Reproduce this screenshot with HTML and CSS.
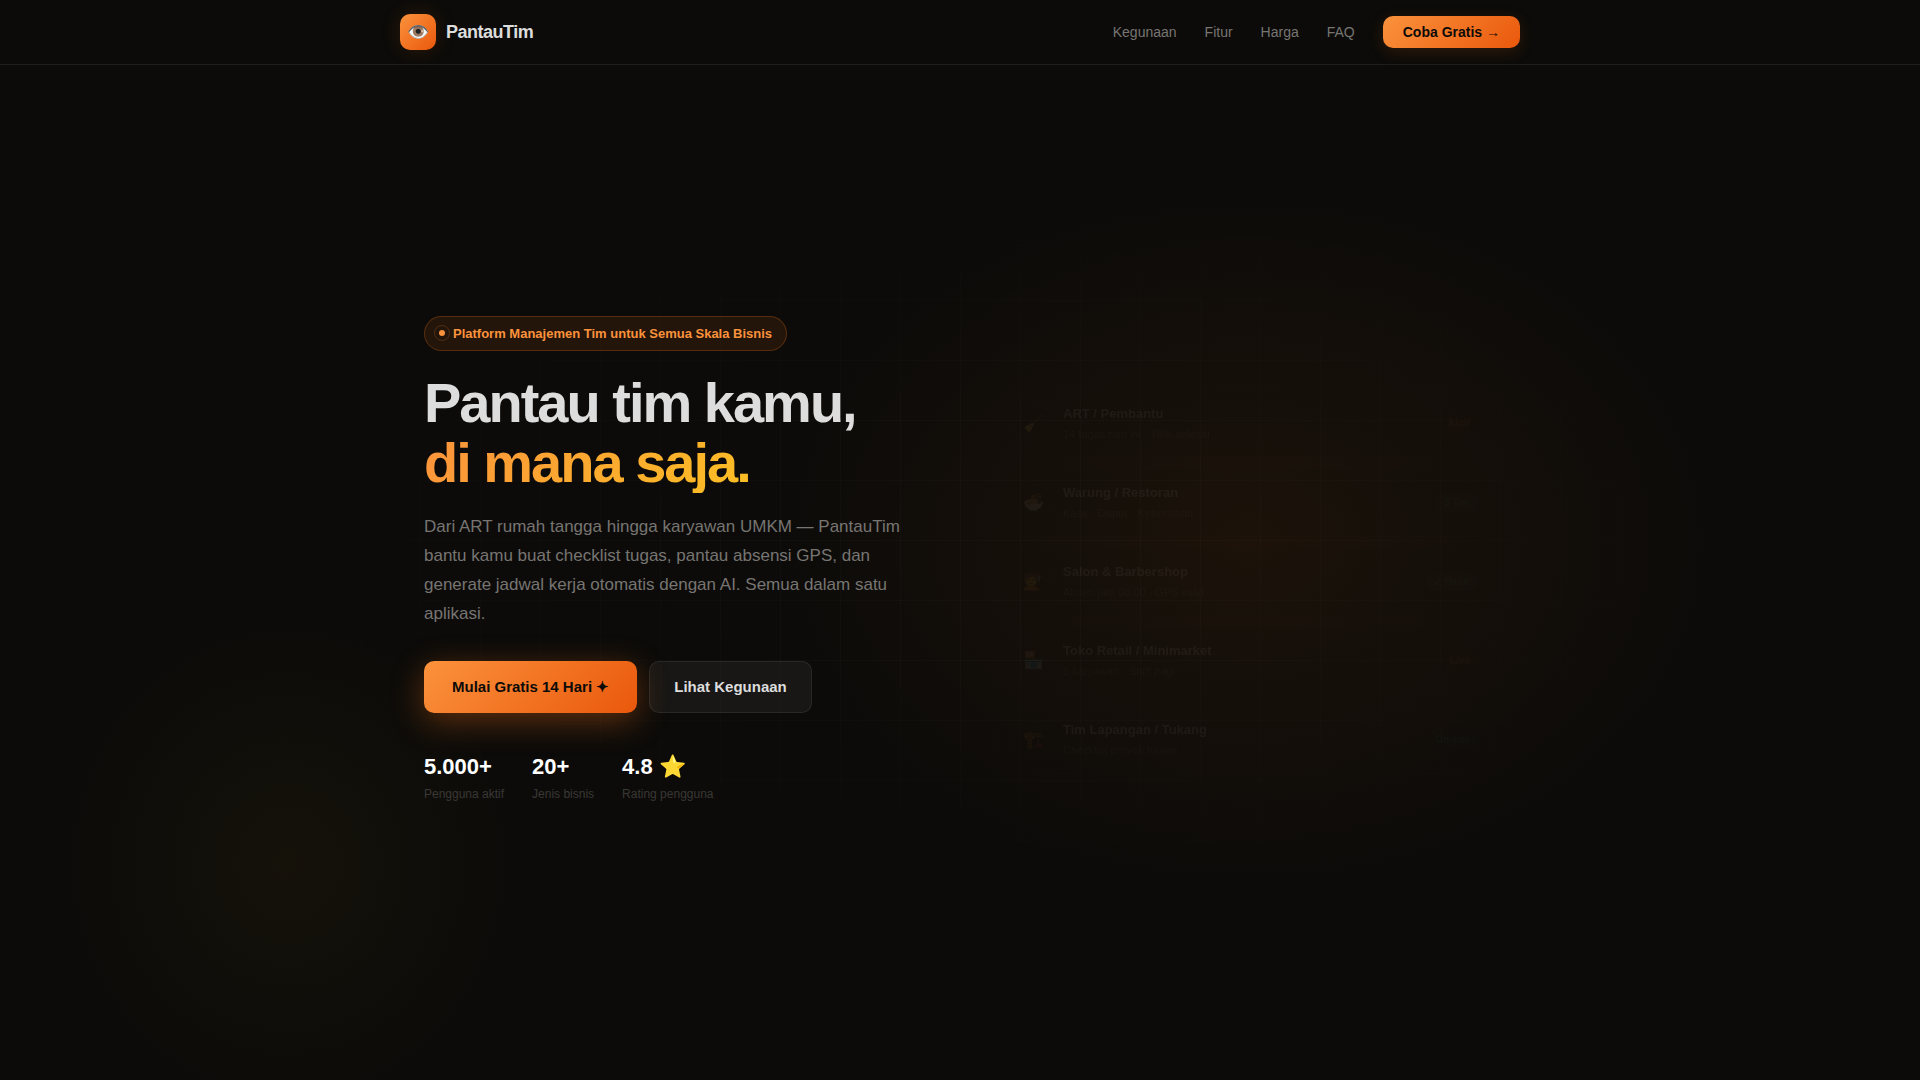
FILE: index.html
```html
<!DOCTYPE html>
<html lang="id">
<head>
    <meta charset="UTF-8">
    <meta name="viewport" content="width=device-width, initial-scale=1.0">
    <title>PantauTim</title>
    <link rel="stylesheet" href="styles.css">
</head>
<body>

    <nav class="navbar">
        <div class="nav-inner">
            <a href="#" class="logo">
                <span class="logo-icon">👁️</span>
                <span>PantauTim</span>
            </a>
            <div class="nav-links">
                <a href="#kegunaan">Kegunaan</a>
                <a href="#fitur">Fitur</a>
                <a href="#harga">Harga</a>
                <a href="#faq">FAQ</a>
                <button type="button" class="nav-cta">Coba Gratis →</button>
            </div>
        </div>
    </nav>

    <main class="hero">
        <div class="hero-grid"></div>
        <div class="hero-inner">
            <section class="hero-text">
                <div class="badge"><span class="badge-dot"></span>Platform Manajemen Tim untuk Semua Skala Bisnis</div>
                <h1>Pantau tim kamu,<br><span class="gradient-text">di mana saja.</span></h1>
                <p class="hero-desc">Dari ART rumah tangga hingga karyawan UMKM — PantauTim bantu kamu buat checklist tugas, pantau absensi GPS, dan generate jadwal kerja otomatis dengan AI. Semua dalam satu aplikasi.</p>
                <div class="hero-buttons">
                    <button type="button" class="btn btn-primary">Mulai Gratis 14 Hari ✦</button>
                    <button type="button" class="btn btn-ghost">Lihat Kegunaan</button>
                </div>
                <div class="stats">
                    <div>
                        <div class="stat-num">5.000+</div>
                        <div class="stat-label">Pengguna aktif</div>
                    </div>
                    <div>
                        <div class="stat-num">20+</div>
                        <div class="stat-label">Jenis bisnis</div>
                    </div>
                    <div>
                        <div class="stat-num">4.8 ⭐</div>
                        <div class="stat-label">Rating pengguna</div>
                    </div>
                </div>
            </section>

            <section class="cards">
                <div class="card">
                    <div class="card-icon">🧹</div>
                    <div class="card-body">
                        <div class="card-title">ART / Pembantu</div>
                        <div class="card-sub">14 tugas hari ini · 78% selesai</div>
                    </div>
                    <span class="pill pill-orange">Aktif</span>
                </div>
                <div class="card">
                    <div class="card-icon">🍜</div>
                    <div class="card-body">
                        <div class="card-title">Warung / Restoran</div>
                        <div class="card-sub">Kasir · Dapur · Kebersihan</div>
                    </div>
                    <span class="pill pill-green">3 Tim</span>
                </div>
                <div class="card">
                    <div class="card-icon">💇</div>
                    <div class="card-body">
                        <div class="card-title">Salon &amp; Barbershop</div>
                        <div class="card-sub">Absen jam 08:00 · GPS valid</div>
                    </div>
                    <span class="pill pill-green">✓ Hadir</span>
                </div>
                <div class="card">
                    <div class="card-icon">🏪</div>
                    <div class="card-body">
                        <div class="card-title">Toko Retail / Minimarket</div>
                        <div class="card-sub">5 karyawan · Shift pagi</div>
                    </div>
                    <span class="pill pill-orange">Live</span>
                </div>
                <div class="card">
                    <div class="card-icon">🏗️</div>
                    <div class="card-body">
                        <div class="card-title">Tim Lapangan / Tukang</div>
                        <div class="card-sub">Checklist proyek harian</div>
                    </div>
                    <span class="pill pill-green">On-site</span>
                </div>
            </section>
        </div>
    </main>

</body>
</html>
```
FILE: styles.css
```css
* {
    box-sizing: border-box;
    margin: 0;
    padding: 0;
}
body {
    font-family: "Liberation Sans", Arial, sans-serif;
    background-color: #0c0b09;
    color: #dddddd;
}
a {
    color: inherit;
    text-decoration: none;
}
button {
    font-family: inherit;
    font-weight: bold;
    border: none;
    cursor: pointer;
}

/* Navbar */
.navbar {
    position: fixed;
    top: 0;
    left: 0;
    right: 0;
    z-index: 10;
    background-color: #0c0b09;
    border-bottom: 1px solid #1f1e1c;
}
.nav-inner {
    max-width: 1120px;
    height: 64px;
    margin: 0 auto;
    display: flex;
    align-items: center;
    justify-content: space-between;
}
.logo {
    display: flex;
    align-items: center;
    gap: 10px;
    font-size: 18px;
    font-weight: bold;
    letter-spacing: -0.5px;
}
.logo-icon {
    width: 36px;
    height: 36px;
    display: flex;
    align-items: center;
    justify-content: center;
    border-radius: 10px;
    background: linear-gradient(135deg, #fb923c, #ea580c);
    box-shadow: 0 0 20px rgba(249, 115, 22, 0.15);
    letter-spacing: 0;
    font-size: 18px;
}
.nav-links {
    display: flex;
    align-items: center;
    gap: 28px;
    font-size: 14px;
    color: #777572;
}
.nav-cta {
    height: 32px;
    padding: 0 20px;
    border-radius: 10px;
    background: linear-gradient(135deg, #fb923c, #ea580c);
    box-shadow: 0 4px 16px rgba(249, 115, 22, 0.15);
    color: #0c0b09;
    font-size: 14px;
}

/* Hero */
.hero {
    position: relative;
    min-height: 100vh;
    padding: 100px 24px 61px;
    display: flex;
    align-items: center;
    justify-content: center;
    background:
        radial-gradient(ellipse 25% 33% at 65% 50%, rgba(249, 115, 22, 0.07), transparent),
        radial-gradient(ellipse 12% 23% at 15% 80%, rgba(251, 191, 36, 0.04), transparent);
}
.hero-grid {
    position: absolute;
    inset: 0;
    background-image:
        linear-gradient(rgba(255, 255, 255, 0.02) 1px, transparent 1px),
        linear-gradient(90deg, rgba(255, 255, 255, 0.02) 1px, transparent 1px);
    background-size: 60px 60px;
    -webkit-mask-image: radial-gradient(ellipse 44% 38% at 50% 50%, black 30%, transparent);
    mask-image: radial-gradient(ellipse 44% 38% at 50% 50%, black 30%, transparent);
}
.hero-inner {
    position: relative;
    width: 100%;
    max-width: 1072px;
    display: grid;
    grid-template-columns: 1fr 1fr;
    gap: 76px;
    align-items: center;
}
.badge {
    display: inline-flex;
    align-items: center;
    gap: 8px;
    height: 35px;
    padding: 0 14px;
    margin-bottom: 22px;
    border: 1px solid rgba(249, 115, 22, 0.25);
    border-radius: 20px;
    background-color: rgba(249, 115, 22, 0.1);
    color: #fb923c;
    font-size: 13px;
    font-weight: bold;
    white-space: nowrap;
}
.badge-dot {
    position: relative;
    width: 6px;
    height: 6px;
    border-radius: 50%;
    background-color: #fb923c;
}
.badge-dot::after {
    content: "";
    position: absolute;
    inset: -5px;
    border: 1px solid rgba(251, 146, 60, 0.2);
    border-radius: 50%;
}
h1 {
    font-size: 56px;
    line-height: 60px;
    letter-spacing: -2px;
    margin-bottom: 19px;
    white-space: nowrap;
}
.gradient-text {
    display: inline-block;
    background: linear-gradient(135deg, #fb923c, #fbbf24);
    -webkit-background-clip: text;
    background-clip: text;
    color: transparent;
}
.hero-desc {
    max-width: 480px;
    margin-bottom: 33px;
    font-size: 17px;
    line-height: 29px;
    color: #777572;
}
.hero-buttons {
    display: flex;
    gap: 12px;
    margin-bottom: 36px;
}
.btn {
    height: 52px;
    border-radius: 10px;
    font-size: 15px;
}
.btn-primary {
    padding: 0 28px;
    background: linear-gradient(135deg, #fb923c, #ea580c);
    box-shadow: 0 8px 32px rgba(249, 115, 22, 0.35);
    color: #0c0b09;
}
.btn-ghost {
    padding: 0 24px;
    border: 1px solid rgba(255, 255, 255, 0.08);
    background-color: rgba(255, 255, 255, 0.05);
    color: #dddddd;
}
.stats {
    display: flex;
    gap: 28px;
}
.stat-num {
    font-size: 22px;
    font-weight: bold;
    line-height: 35px;
    color: #ffffff;
}
.stat-label {
    font-size: 12px;
    line-height: 20px;
    color: #3a3835;
}

/* Cards, still at the start of their fade in */
.cards {
    display: flex;
    flex-direction: column;
    gap: 10px;
    padding-top: 44px;
}
.card {
    display: flex;
    align-items: center;
    gap: 12px;
    padding: 14px 16px;
    border: 1px solid rgba(255, 255, 255, 0.08);
    border-radius: 14px;
    background-color: #141412;
    opacity: 0.05;
}
.card-icon {
    width: 36px;
    height: 36px;
    display: flex;
    align-items: center;
    justify-content: center;
    border: 1px solid rgba(255, 255, 255, 0.1);
    border-radius: 10px;
    font-size: 17px;
}
.card-body {
    flex: 1;
}
.card-title {
    margin-bottom: 2px;
    font-size: 13px;
    font-weight: bold;
    line-height: 20px;
}
.card-sub {
    font-size: 11px;
    line-height: 17px;
    color: #777572;
}
.pill {
    padding: 4px 9px;
    border-radius: 20px;
    font-size: 10px;
    font-weight: bold;
    opacity: 0.6;
}
.pill-orange {
    background-color: rgba(249, 115, 22, 0.15);
    color: #fb923c;
}
.pill-green {
    background-color: rgba(52, 211, 153, 0.15);
    color: #34d399;
}
```
